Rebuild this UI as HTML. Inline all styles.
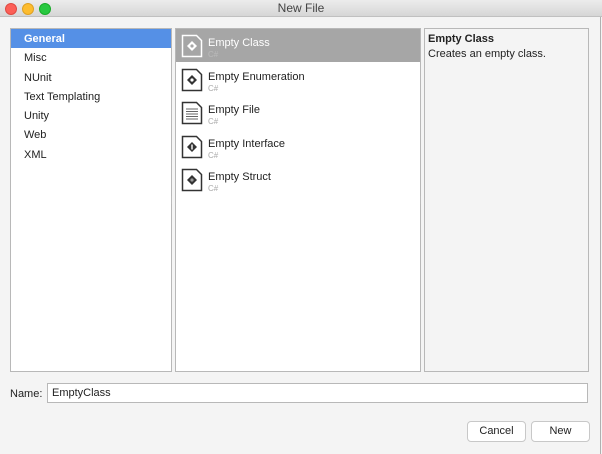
<!DOCTYPE html>
<html><head><style>
body{margin:0;width:602px;height:454px;background:#f4f4f4;font-family:"Liberation Sans",sans-serif;font-size:11px;color:#222;position:relative;overflow:hidden}
.tb{position:absolute;left:0;top:0;width:602px;height:16px;background:linear-gradient(#ececec,#d6d6d6);border-bottom:1px solid #c0c0c0;text-align:center;font-size:12px;line-height:16px;color:#444}
.dot{position:absolute;top:3px;width:10px;height:10px;border-radius:50%}
.p{position:absolute;top:28px;height:342px;border:1px solid #b8b8b8;background:#fff}
.li{height:19.3px;line-height:20px;padding-left:13px}
.sel{background:#5590e6;color:#fff;font-weight:bold}
.mi{position:absolute;left:0;width:244px;height:33px}
.mi svg{position:absolute;left:5px;top:5px}
.mi .t{position:absolute;left:32px;top:8px;font-size:11px}
.mi .s{position:absolute;left:32px;top:21px;font-size:8px;color:#aaa}
.btn{position:absolute;top:421px;height:19px;border:1px solid #c8c8c8;border-radius:4px;background:#fff;text-align:center;line-height:19px;font-size:11px}
.sp{position:absolute;top:196px;width:3px;height:8px;border-left:1px solid #bbb;border-right:1px solid #bbb}
</style></head><body>
<div class="tb">New File</div>
<div class="dot" style="left:5px;background:#fc5f57;border:0.5px solid #de4a42"></div>
<div class="dot" style="left:22px;background:#fdbc2e;border:0.5px solid #dea123"></div>
<div class="dot" style="left:39px;background:#28c840;border:0.5px solid #1aab29"></div>
<div class="p" style="left:10px;width:160px">
<div class="li sel">General</div><div class="li">Misc</div><div class="li">NUnit</div><div class="li">Text Templating</div><div class="li">Unity</div><div class="li">Web</div><div class="li">XML</div>
</div>
<div class="sp" style="left:171px"></div>
<div class="p" style="left:175px;width:244px">
<div class="mi" style="top:0;background:#a6a6a6;color:#fff"><svg width="22" height="24"><path d="M1.5 1.5h14l5 5v16h-19z" fill="none" stroke="#fff" stroke-width="1.5"/><path d="M11 7l5 5-5 5-5-5z" fill="#fff"/><circle cx="11" cy="12" r="1.6" fill="#a6a6a6"/></svg><div class="t">Empty Class</div><div class="s" style="color:#bbb">C#</div></div>
<div class="mi" style="top:33.5px"><svg width="22" height="24"><path d="M1.5 1.5h14l5 5v16h-19z" fill="none" stroke="#333" stroke-width="1.5"/><path d="M11 7l5 5-5 5-5-5z" fill="#333"/><circle cx="11" cy="12" r="1.6" fill="#fff"/></svg><div class="t">Empty Enumeration</div><div class="s">C#</div></div>
<div class="mi" style="top:67px"><svg width="22" height="24"><path d="M1.5 1.5h14l5 5v16h-19z" fill="none" stroke="#333" stroke-width="1.5"/><path d="M5 8h12M5 10.5h12M5 13h12M5 15.5h12M5 18h12" stroke="#666"/></svg><div class="t">Empty File</div><div class="s">C#</div></div>
<div class="mi" style="top:100.5px"><svg width="22" height="24"><path d="M1.5 1.5h14l5 5v16h-19z" fill="none" stroke="#333" stroke-width="1.5"/><path d="M11 7l5 5-5 5-5-5z" fill="#333"/><rect x="10.3" y="9.5" width="1.4" height="5" fill="#fff"/></svg><div class="t">Empty Interface</div><div class="s">C#</div></div>
<div class="mi" style="top:134px"><svg width="22" height="24"><path d="M1.5 1.5h14l5 5v16h-19z" fill="none" stroke="#333" stroke-width="1.5"/><path d="M11 7l5 5-5 5-5-5z" fill="#333"/><circle cx="11" cy="12" r="1.6" fill="#999"/></svg><div class="t">Empty Struct</div><div class="s">C#</div></div>
</div>
<div class="sp" style="left:420px"></div>
<div class="p" style="left:424px;width:163px;background:#f4f4f4">
<div style="padding:4px 3px 0;font-weight:bold">Empty Class</div>
<div style="padding:3px 3px 0">Creates an empty class.</div>
</div>
<div style="position:absolute;left:10px;top:388px">Name:</div>
<div style="position:absolute;left:47px;top:383px;width:535px;height:18px;border:1px solid #b8b8b8;background:#fff;line-height:18px;padding-left:4px;font-size:11px">EmptyClass</div>
<div class="btn" style="left:467px;width:57px">Cancel</div>
<div class="btn" style="left:531px;width:57px">New</div>
<div style="position:absolute;left:600px;top:17px;width:1px;height:437px;background:#b0b0b0"></div>
</body></html>
